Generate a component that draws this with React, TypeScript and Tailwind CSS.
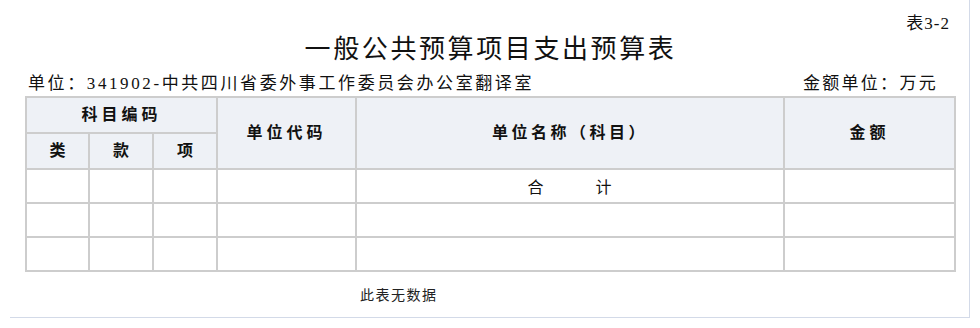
const font = { fontFamily: '"Liberation Serif", "Noto Sans CJK SC", serif' };

const cols = [63, 64, 64, 139, 428, 171];

const App = () => {
  return (
    <div className="bg-white w-[980px] h-[328px]" style={font}>
      <div className="ml-[10px] w-[960px] h-[318px] border-r border-b border-[#d3dae8] flex flex-col text-[#111]">
        <div className="mt-[14px] h-[20px] leading-[20px] text-[17px] tracking-[1px] text-right pr-[19px]">表3-2</div>
        <div className="mt-px h-[30px] leading-[30px] text-[26px] text-center tracking-[2.6px] pl-[2px]">
          一般公共预算项目支出预算表
        </div>
        <div className="mt-[9px] h-[20px] leading-[20px] text-[17px] flex justify-between pl-[18px] pr-[31px]">
          <span className="tracking-[2.6px]">单位：341902-中共四川省委外事工作委员会办公室翻译室</span>
          <span className="tracking-[2.3px]">金额单位：万元</span>
        </div>
        <div className="mt-[2px] pl-[15px]">
          <table className="border-collapse table-fixed w-[929px] text-[16px]">
            <colgroup>
              {cols.map((w, i) => (
                <col key={i} style={{ width: w }} />
              ))}
            </colgroup>
            <thead>
              <tr className="h-[36px] bg-[#eef1f6]">
                <th colSpan={3} className="border-2 border-[#cdcdcd] text-center tracking-[4px] font-semibold">科目编码</th>
                <th rowSpan={2} className="border-2 border-[#cdcdcd] text-center tracking-[4px] font-semibold">单位代码</th>
                <th rowSpan={2} className="border-2 border-[#cdcdcd] text-center tracking-[3.5px] font-semibold">单位名称（科目）</th>
                <th rowSpan={2} className="border-2 border-[#cdcdcd] text-center tracking-[4px] font-semibold">金额</th>
              </tr>
              <tr className="h-[36px] bg-[#eef1f6]">
                <th className="border-2 border-[#cdcdcd] text-center font-semibold">类</th>
                <th className="border-2 border-[#cdcdcd] text-center font-semibold">款</th>
                <th className="border-2 border-[#cdcdcd] text-center font-semibold">项</th>
              </tr>
            </thead>
            <tbody>
              {[0, 1, 2].map(r => (
                <tr key={r} className="h-[34px]">
                  <td className="border-2 border-[#cdcdcd]" />
                  <td className="border-2 border-[#cdcdcd]" />
                  <td className="border-2 border-[#cdcdcd]" />
                  <td className="border-2 border-[#cdcdcd]" />
                  <td className="border-2 border-[#cdcdcd] text-center pt-[3px]">
                    {r === 0 ? <span className="whitespace-pre tracking-[1px]">合　　　计</span> : null}
                  </td>
                  <td className="border-2 border-[#cdcdcd]" />
                </tr>
              ))}
            </tbody>
          </table>
        </div>
        <div className="mt-[15px] pl-[350px] text-[14px] tracking-[1.5px] leading-[18px] text-[#222]">此表无数据</div>
      </div>
    </div>
  );
};

export default App;
